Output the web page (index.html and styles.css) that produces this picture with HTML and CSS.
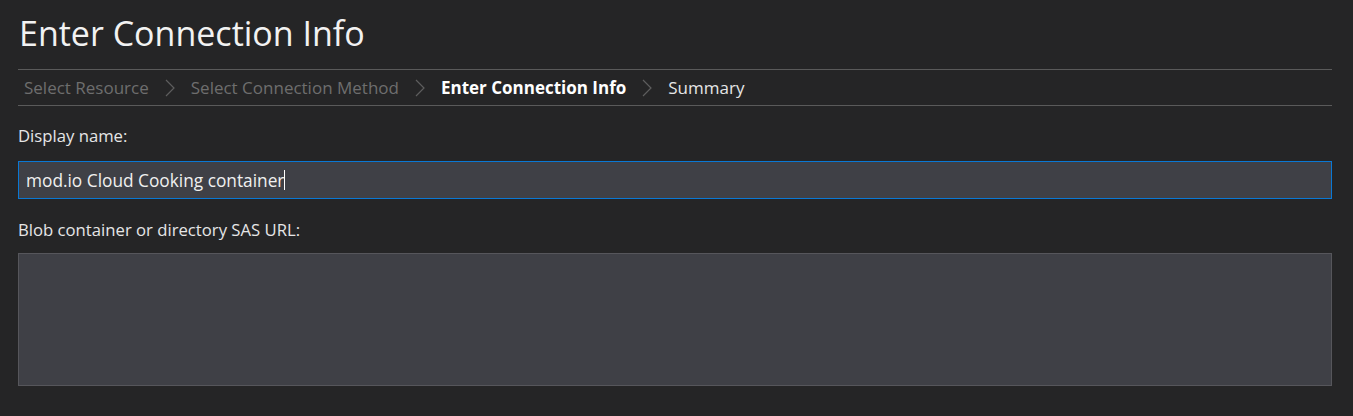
FILE: index.html
```html
<!DOCTYPE html>
<html>
<head>
<meta charset="utf-8">
<link rel="stylesheet" href="styles.css">
</head>
<body>
<div class="page">
  <h1 class="title">Enter Connection Info</h1>
  <nav class="crumbs">
    <span class="crumb done">Select Resource</span>
    <svg class="chev" width="10" height="18" viewBox="0 0 10 18"><polyline points="1,1 9,9 1,17" fill="none" stroke="#5e5e5e" stroke-width="1.2"/></svg>
    <span class="crumb done">Select Connection Method</span>
    <svg class="chev" width="10" height="18" viewBox="0 0 10 18"><polyline points="1,1 9,9 1,17" fill="none" stroke="#5e5e5e" stroke-width="1.2"/></svg>
    <span class="crumb current">Enter Connection Info</span>
    <svg class="chev" width="10" height="18" viewBox="0 0 10 18"><polyline points="1,1 9,9 1,17" fill="none" stroke="#5e5e5e" stroke-width="1.2"/></svg>
    <span class="crumb next">Summary</span>
  </nav>
  <label class="label">Display name:</label>
  <div class="field focused"><span class="value">mod.io Cloud Cooking container</span><span class="caret"></span></div>
  <label class="label second">Blob container or directory SAS URL:</label>
  <div class="area"></div>
</div>
</body>
</html>
```
FILE: styles.css
```css
html, body {
  margin: 0;
  padding: 0;
  background: #252526;
}
body {
  font-family: "Open Sans", "Noto Sans", sans-serif;
  color: #e8e8e8;
}
.page {
  padding: 10px 21px 0 18px;
  display: flex;
  flex-direction: column;
}
.title {
  margin: 0 0 0 1px;
  font-weight: 400;
  font-size: 34px;
  line-height: 46px;
  color: #f2f2f2;
}
.crumbs {
  margin-top: 13px;
  border-top: 1px solid #5a5a5a;
  border-bottom: 1px solid #5a5a5a;
  height: 35px;
  display: flex;
  align-items: center;
  padding-left: 6px;
  gap: 16px;
}
.crumb {
  font-size: 17px;
}
.crumb.done { color: #6e6e6e; }
.crumb.current { color: #ffffff; font-weight: 700; }
.crumb.next { color: #e6e6e6; }
.chev { display: block; }
.label {
  display: block;
  font-size: 16.7px;
  color: #e6e6e6;
  margin-top: 19px;
  line-height: 22px;
}
.label.second { margin-top: 20px; }
.field {
  margin-top: 14px;
  height: 36px;
  background: #3f4046;
  border: 1px solid #5a5a5f;
  display: flex;
  align-items: center;
  padding-left: 7px;
  font-size: 17.3px;
  color: #f0f0f0;
}
.field.focused { border-color: #0a78d4; }
.caret {
  display: inline-block;
  width: 1px;
  height: 20px;
  background: #ffffff;
  margin-left: 0;
}
.area {
  margin-top: 12px;
  height: 131px;
  background: #3f4046;
  border: 1px solid #56565b;
}
```
